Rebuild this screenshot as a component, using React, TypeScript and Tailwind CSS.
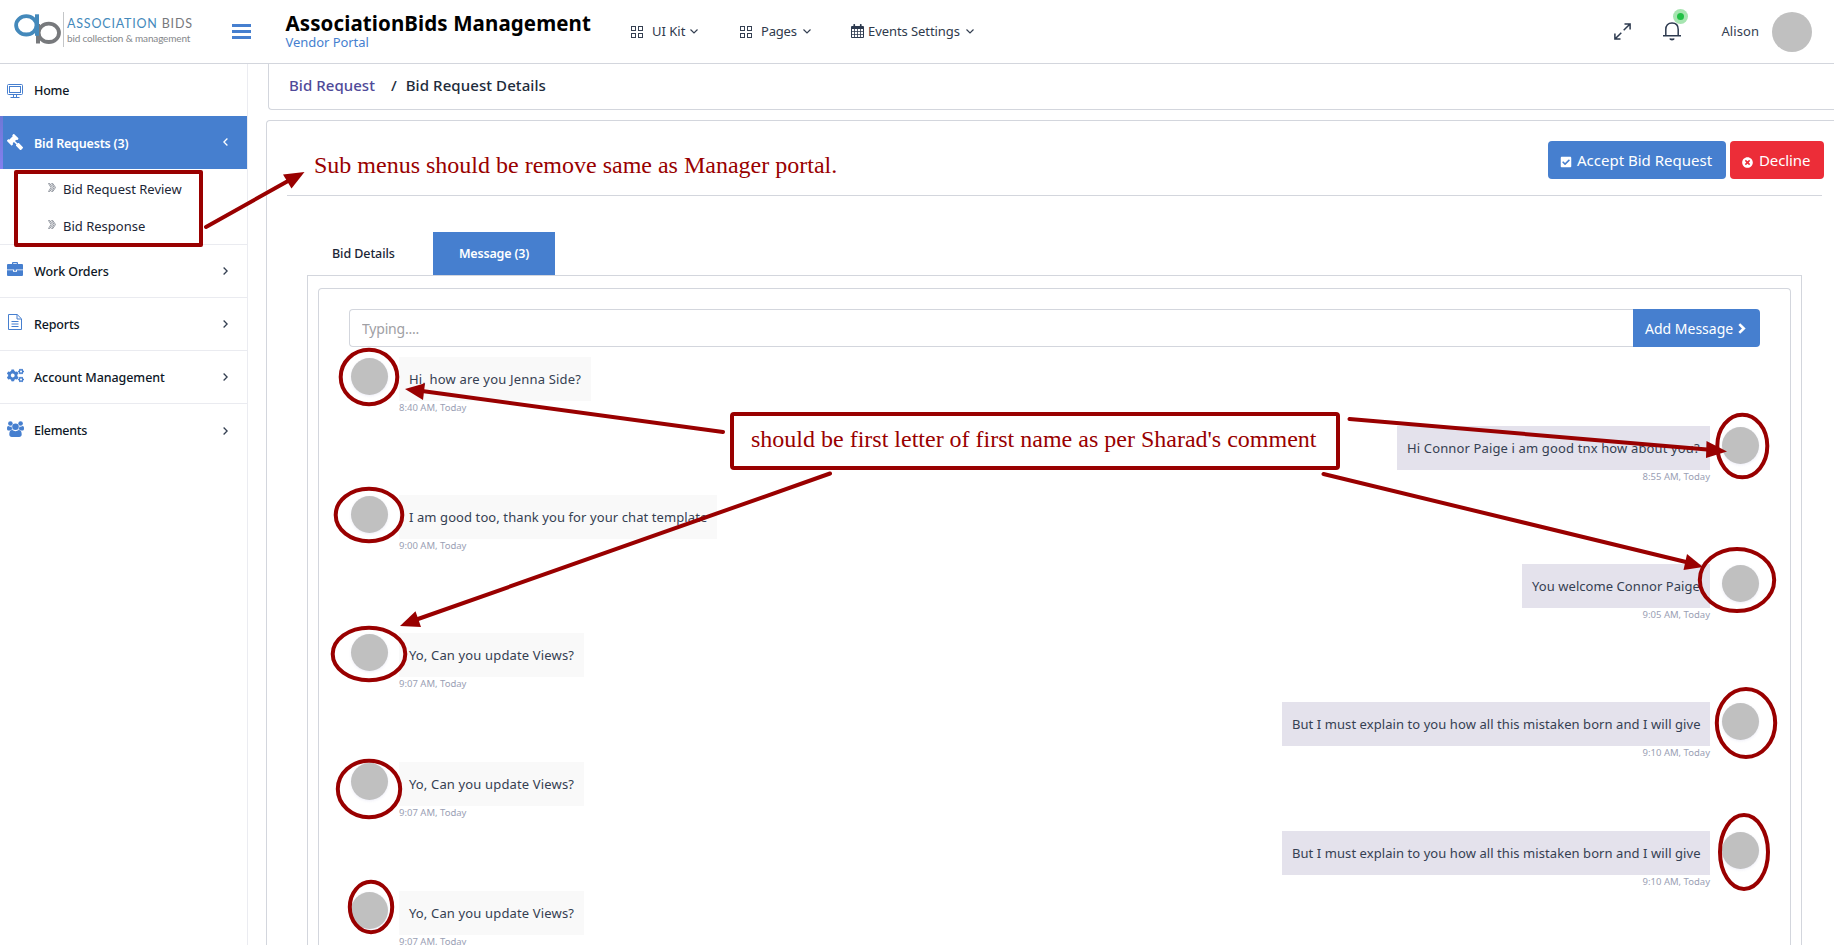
import type { ReactNode } from 'react';
import { FaCheckSquare, FaCogs, FaGavel, FaTimesCircle } from 'react-icons/fa';

function Logo() {
  return (
    <div className="flex h-full w-[232px] shrink-0 items-start pl-3.5 pt-3">
      <svg width="48" height="36" viewBox="0 0 48 36" fill="none" className="shrink-0">
        <ellipse cx="34.8" cy="20.8" rx="10.2" ry="9.2" stroke="#77797c" strokeWidth="3.8" />
        <path d="M24 12v19.5" stroke="#77797c" strokeWidth="4" />
        <ellipse cx="12.3" cy="13.3" rx="10.2" ry="9.2" stroke="#4489bb" strokeWidth="3.8" />
        <path d="M23 2.3v21.5" stroke="#4489bb" strokeWidth="4" />
      </svg>
      <div className="ml-px mr-1 h-[35px] w-px bg-[#c4c6c8]" />
      <div className="-ml-px flex flex-col whitespace-nowrap pt-1 font-['Lato',sans-serif]">
        <div className="text-[12.5px] leading-4 tracking-[0.8px] text-[#4489bb]">
          ASSOCIATION <span className="text-[#77797c]">BIDS</span>
        </div>
        <div className="text-[10px] leading-[13px] tracking-[-0.16px] text-[#85878a]">bid collection &amp; management</div>
      </div>
    </div>
  );
}

function GridIcon() {
  return (
    <svg width="12" height="12" viewBox="0 0 12 12" fill="none" stroke="#354052" className="shrink-0">
      <rect x="0.5" y="0.5" width="4" height="4" />
      <rect x="7.5" y="0.5" width="4" height="4" />
      <rect x="0.5" y="7.5" width="4" height="4" />
      <rect x="7.5" y="7.5" width="4" height="4" />
    </svg>
  );
}

function CalendarIcon() {
  return (
    <svg width="13" height="14" viewBox="0 0 13 14" className="mb-px shrink-0">
      <path
        fill="#2d3a4f"
        fillRule="evenodd"
        d="M1 2h1.4V.8a.8.8 0 0 1 1.7 0V2h4.8V.8a.8.8 0 0 1 1.7 0V2H12a1 1 0 0 1 1 1v10a1 1 0 0 1-1 1H1a1 1 0 0 1-1-1V3a1 1 0 0 1 1-1zM1 5v2.200h2.200V5zM4 5v2.200h2.200V5zM7 5v2.200h2.200V5zM10 5v2.200h2V5zM1 8v2.200h2.200V8zM4 8v2.200h2.200V8zM7 8v2.200h2.200V8zM10 8v2.200h2V8zM1 11v2h2.200v-2zM4 11v2h2.200v-2zM7 11v2h2.200v-2zM10 11v2h2v-2z"
      />
    </svg>
  );
}

function AngleDown() {
  return (
    <svg width="8" height="5" viewBox="0 0 8 5" fill="none" stroke="#354052" strokeWidth="1.2" className="shrink-0">
      <path d="M.5.5 4 4 7.5.5" />
    </svg>
  );
}

function NavItem({ className, icon, children }: { className: string; icon: ReactNode; children: ReactNode }) {
  return (
    <div className={`flex shrink-0 items-center text-[13px] text-[#2f3a4c] ${className}`}>
      {icon}
      {children}
      <AngleDown />
    </div>
  );
}

function Header() {
  return (
    <header className="flex h-16 shrink-0 items-stretch border-b border-[#d3d6dd] bg-white">
      <Logo />
      <div className="flex w-[53.5px] shrink-0 flex-col gap-[3px] pt-6">
        <div className="h-[3px] w-[19px] bg-[#467fcf]" />
        <div className="h-[3px] w-[19px] bg-[#467fcf]" />
        <div className="h-[3px] w-[19px] bg-[#467fcf]" />
      </div>
      <div className="flex w-[345.5px] shrink-0 flex-col pt-3">
        <div className="whitespace-nowrap text-[20.5px] font-bold leading-[22px] tracking-[0.1px] text-black">
          AssociationBids Management
        </div>
        <div className="text-[13px] leading-4 tracking-[-0.05px] text-[#467fcf]">Vendor Portal</div>
      </div>
      <nav className="flex items-center">
        <NavItem className="w-[109px]" icon={<GridIcon />}>
          <span className="ml-[9px] mr-[5px]">UI Kit</span>
        </NavItem>
        <NavItem className="w-[111px]" icon={<GridIcon />}>
          <span className="ml-[9px] mr-[6px] tracking-[-0.2px]">Pages</span>
        </NavItem>
        <NavItem className="" icon={<CalendarIcon />}>
          <span className="ml-1 mr-1.5 tracking-[-0.07px]">Events Settings</span>
        </NavItem>
      </nav>
      <div className="ml-auto flex items-center pr-[22px]">
        <svg width="17" height="17" viewBox="0 0 17 17" fill="none" stroke="#2d3a4f" strokeWidth="1.5" className="mb-px">
          <path d="M10.5 1h5.6v5.6M16 1 9.7 7.3M6.5 16H.9v-5.6M1 16l6.3-6.3" />
        </svg>
        <div className="relative ml-8">
          <svg width="18" height="19" viewBox="0 0 18 19" fill="none" stroke="#2d3a4f" strokeWidth="1.5">
            <path d="M0 13.700h18M2.8 13.500V7.4C2.8 3.4 5 1 9 1s6.2 2.4 6.2 6.4v6.100" />
            <path d="M7 16.500c.5 1.300 3.500 1.300 4 0" strokeWidth="1.8" />
          </svg>
          <div className="absolute -top-[13px] left-[10px] flex size-[15px] items-center justify-center rounded-full bg-[#a6e5b0]">
            <div className="size-[7px] rounded-full bg-[#21c045]" />
          </div>
        </div>
        <span className="ml-10 text-[13px] tracking-[0.07px] text-[#354052]">Alison</span>
        <div className="ml-[13px] size-10 rounded-full bg-[#c0c0c0]" />
      </div>
    </header>
  );
}

function AngleRight() {
  return (
    <svg width="5" height="8" viewBox="0 0 5 8" fill="none" stroke="#354052" strokeWidth="1.3" className="ml-auto mr-[19px]">
      <path d="M.6.5 4.1 4 .6 7.5" />
    </svg>
  );
}

function DesktopIcon() {
  return (
    <svg width="16" height="14" viewBox="0 0 16 14" fill="none" stroke="#467fcf">
      <rect x=".5" y=".5" width="15" height="10" rx="1" />
      <rect x="2.5" y="2.5" width="11" height="6" />
      <path d="M6.5 10.5v2.5M9.5 10.5v2.5M3.5 13.5h9" />
    </svg>
  );
}

function BriefcaseIcon() {
  return (
    <svg width="16" height="14" viewBox="0 0 16 14" fill="#467fcf">
      <path
        fillRule="evenodd"
        d="M5 2V1a1 1 0 0 1 1-1h4a1 1 0 0 1 1 1v1h4a1 1 0 0 1 1 1v4.5H0V3a1 1 0 0 1 1-1zM6.2 1.200V2h3.600v-.8z"
      />
      <path fillRule="evenodd" d="M0 8.300h6v1.500h4V8.300h6V13a1 1 0 0 1-1 1H1a1 1 0 0 1-1-1z" />
      <path d="M7 7.200h2v1.600H7z" />
    </svg>
  );
}

function ReportIcon() {
  return (
    <svg width="14" height="16" viewBox="0 0 14 16" fill="none" stroke="#467fcf" className="ml-px">
      <path d="M.5.5h8.700l4.300 4.300v10.700H.5zM9 .7v4.300h4.300" />
      <path d="M3.500 7.500h7M3.500 10h7M3.500 12.500h7" />
    </svg>
  );
}

function UsersIcon() {
  return (
    <svg width="17" height="16" viewBox="0 0 17 16" fill="#467fcf">
      <circle cx="3.400" cy="2.500" r="2.300" />
      <circle cx="13.600" cy="2.500" r="2.300" />
      <path d="M0 7.500c0-1.700.5-2.400 1.500-2.400.6.400 1.200.6 1.900.6.500 0 .9-.1 1.300-.2-.1 1.200.2 2 .8 2.900-1 0-1.800.5-2.400 1.100H1.600C.5 9.500 0 8.900 0 7.500zM17 7.500c0-1.700-.5-2.400-1.500-2.400-.6.400-1.200.6-1.900.6-.5 0-.9-.1-1.300-.2.1 1.200-.2 2-.8 2.900 1 0 1.800.5 2.400 1.100h1.500c1.100 0 1.600-.6 1.600-2z" />
      <circle cx="8.500" cy="5.700" r="3.300" />
      <path d="M5.300 9.100c.9.700 2 1.100 3.200 1.100s2.300-.4 3.200-1.100c2.300 0 3 2.100 3 4.400 0 1.600-1 2.500-2.500 2.500H4.800c-1.500 0-2.500-.9-2.500-2.500 0-2.300.7-4.400 3-4.400z" />
    </svg>
  );
}

function SideItem({ icon, label, tracking, border }: { icon: ReactNode; label: string; tracking: string; border: boolean }) {
  return (
    <div className={`flex h-[53px] items-center ${border ? 'border-b border-[#eaebf0]' : ''}`}>
      <div className="flex w-[34px] shrink-0 pb-1 pl-[7px]">{icon}</div>
      <span className={`pt-0.5 text-[12.5px] font-medium text-[#0e1726] ${tracking}`}>{label}</span>
      <AngleRight />
    </div>
  );
}

function SubItem({ label }: { label: string }) {
  return (
    <div className="flex h-[37px] items-center pl-12">
      <svg width="8" height="9" viewBox="0 0 8 9" fill="none" stroke="#8a8f99" strokeWidth=".9" className="mb-[3px] mr-[7px]">
        <path d="M.5.5h1.300L4.600 4.500 1.800 8.500H.5L3 4.500zM3.600.5h1.200l2.700 4-2.700 4H3.600l2.500-4z" />
      </svg>
      <span className="text-[13px] leading-5 text-[#1c2636]">{label}</span>
    </div>
  );
}

function Sidebar() {
  return (
    <aside className="flex w-[248px] shrink-0 flex-col border-r border-[#ebecf1] bg-white">
      <div className="flex h-[52px] items-center">
        <div className="flex w-[34px] shrink-0 pl-[7px] pt-px">
          <DesktopIcon />
        </div>
        <span className="pt-0.5 text-[12.5px] font-medium tracking-[-0.2px] text-[#0e1726]">Home</span>
      </div>
      <div className="flex h-[53px] items-center bg-[#467fcf] text-white">
        <div className="h-full w-[3px] shrink-0 bg-gradient-to-b from-[#6e78d6] to-[#8480ee]" />
        <div className="flex w-[31px] shrink-0 pb-0.5 pl-1">
          <FaGavel size={16} className="-scale-x-100" />
        </div>
        <span className="pt-[3px] text-[12.5px] font-semibold tracking-[-0.18px]">Bid Requests (3)</span>
        <svg width="5" height="8" viewBox="0 0 5 8" fill="none" stroke="#fff" strokeWidth="1.3" className="mb-0.5 ml-auto mr-[19px]">
          <path d="M4.400.5.9 4l3.500 3.500" />
        </svg>
      </div>
      <div className="flex h-[76px] flex-col border-b border-[#eaebf0] pt-0.5">
        <SubItem label="Bid Request Review" />
        <SubItem label="Bid Response" />
      </div>
      <SideItem icon={<BriefcaseIcon />} label="Work Orders" tracking="tracking-[-0.1px]" border />
      <SideItem icon={<ReportIcon />} label="Reports" tracking="tracking-[-0.17px]" border />
      <SideItem icon={<FaCogs size={17} color="#467fcf" />} label="Account Management" tracking="tracking-[-0.07px]" border />
      <SideItem icon={<UsersIcon />} label="Elements" tracking="tracking-[-0.28px]" border={false} />
    </aside>
  );
}

type Message = { text: string; time: string; mine: boolean; row: string; bubble: string };

const messages: Message[] = [
  { text: 'Hi, how are you Jenna Side?', time: '8:40 AM, Today', mine: false, row: 'h-[69px]', bubble: 'w-[192px] tracking-[0.18px]' },
  { text: 'Hi Connor Paige i am good tnx how about you?', time: '8:55 AM, Today', mine: true, row: 'h-[69px]', bubble: 'w-[313px] tracking-[0.14px]' },
  { text: 'I am good too, thank you for your chat template', time: '9:00 AM, Today', mine: false, row: 'h-[69px]', bubble: 'w-[318px] tracking-[0.09px]' },
  { text: 'You welcome Connor Paige', time: '9:05 AM, Today', mine: true, row: 'h-[69px]', bubble: 'w-[188px] tracking-[0.06px]' },
  { text: 'Yo, Can you update Views?', time: '9:07 AM, Today', mine: false, row: 'h-[69px]', bubble: 'w-[185px] tracking-[0.15px]' },
  { text: 'But I must explain to you how all this mistaken born and I will give', time: '9:10 AM, Today', mine: true, row: 'h-[60px]', bubble: 'w-[428px] tracking-[0.07px]' },
  { text: 'Yo, Can you update Views?', time: '9:07 AM, Today', mine: false, row: 'h-[69px]', bubble: 'w-[185px] tracking-[0.15px]' },
  { text: 'But I must explain to you how all this mistaken born and I will give', time: '9:10 AM, Today', mine: true, row: 'h-[60px]', bubble: 'w-[428px] tracking-[0.07px]' },
  { text: 'Yo, Can you update Views?', time: '9:07 AM, Today', mine: false, row: 'h-[69px]', bubble: 'w-[185px] tracking-[0.15px]' },
];

function MessageRow({ message }: { message: Message }) {
  const { text, time, mine, row, bubble } = message;
  return (
    <div className={`flex shrink-0 items-start ${row} ${mine ? 'flex-row-reverse gap-3 pr-px' : 'gap-[11px] pl-0.5'}`}>
      <div className="mt-px size-[37px] shrink-0 rounded-full bg-[#c0c0c0] shadow-[0_1px_3px_rgba(110,110,190,0.12)]" />
      <div className={`flex flex-col ${mine ? 'items-end' : 'items-start'}`}>
        <div
          className={`flex h-11 items-center whitespace-nowrap px-2.5 pt-0.5 text-[13px] text-[#354052] ${bubble} ${mine ? 'bg-[#e4e2ec]' : 'bg-[#f9f9f9]'}`}
        >
          {text}
        </div>
        <div className="whitespace-nowrap text-[9.5px] leading-[13px] text-[#9aa0b4]">{time}</div>
      </div>
    </div>
  );
}

function MainContent() {
  return (
    <main className="flex min-w-0 flex-1 flex-col overflow-hidden">
      <div className="ml-5 flex h-[46px] shrink-0 items-center rounded-bl border-b border-l border-[#d3d6dd] pb-[3px] pl-5 text-[15px] font-medium">
        <span className="tracking-[0.04px] text-[#4f4a99]">Bid Request</span>
        <span className="ml-4 text-[#212b3b]">/</span>
        <span className="ml-[9px] tracking-[0.08px] text-[#212b3b]">Bid Request Details</span>
      </div>
      <div className="ml-[18px] mt-2.5 flex min-h-0 flex-1 flex-col rounded-tl border-l border-t border-[#d3d6dd]">
        <div className="ml-5 mr-3 flex h-[75px] shrink-0 items-start justify-end border-b border-[#d3d6dd] pt-5">
          <div className="-mr-0.5 flex gap-1 text-[15px] text-white">
            <button className="flex h-[38px] w-[178px] items-center rounded bg-[#467fcf] pl-3">
              <FaCheckSquare size={12} className="mr-[5px] mt-1" />
              <span className="whitespace-nowrap">Accept Bid Request</span>
            </button>
            <button className="flex h-[38px] w-[94px] items-center rounded bg-[#ec2d38] pl-3">
              <FaTimesCircle size={11} className="mr-1.5 mt-1" />
              <span className="tracking-[-0.12px]">Decline</span>
            </button>
          </div>
        </div>
        <div className="ml-10 mr-8 mt-9 flex h-[43px] shrink-0 text-[12.5px]">
          <div className="flex w-[126px] items-center pl-[25px] pt-0.5 font-medium tracking-[-0.08px] text-[#1c2636]">Bid Details</div>
          <div className="flex w-[122px] items-center justify-center bg-[#467fcf] pt-0.5 font-semibold tracking-[-0.18px] text-white">
            Message (3)
          </div>
        </div>
        <div className="ml-10 mr-8 flex min-h-0 flex-1 flex-col border-x border-t border-[#d3d6dd] px-2.5 pt-3">
          <div className="flex min-h-0 flex-1 flex-col rounded-t border-x border-t border-[#d3d6dd] px-[30px] pt-5">
            <div className="flex h-[38px] shrink-0">
              <input
                placeholder="Typing...."
                className="min-w-0 flex-1 rounded-l border border-r-0 border-[#d3d6dd] px-3 text-[14px] tracking-[-0.2px] placeholder:text-[#a0a0a4]"
              />
              <button className="flex w-[127px] items-center rounded-r bg-[#467fcf] pl-3 text-[14px] text-white">
                <span className="whitespace-nowrap">Add Message</span>
                <svg width="8" height="11" viewBox="0 0 8 11" fill="none" stroke="#fff" strokeWidth="2.600" className="ml-[5px]">
                  <path d="M1.300 1.100 5.800 5.500 1.300 9.900" />
                </svg>
              </button>
            </div>
            <div className="mt-2.5 flex min-h-0 flex-1 flex-col overflow-hidden">
              {messages.map((m, i) => (
                <MessageRow key={i} message={m} />
              ))}
            </div>
          </div>
        </div>
      </div>
    </main>
  );
}

const circles = [
  [369, 377, 28.3, 27.3],
  [1742.3, 446, 25, 31.3],
  [369, 515, 33.3, 26.3],
  [1737, 580, 37.2, 31],
  [369, 654, 36.3, 26.3],
  [1746, 723, 29.2, 34],
  [369, 789, 31.2, 28.2],
  [1744, 852, 24, 37],
  [371, 907, 21.2, 25.2],
];

const arrows = [
  { shaft: 'M206 227 288 181', head: '304.5,172 283,174.5 291.5,188.5' },
  { shaft: 'M723 432 422 391', head: '405,389 425,383.3 423,400' },
  { shaft: 'M1349.5 419 1707 449.5', head: '1727,451.5 1706.5,441 1706,458' },
  { shaft: 'M830 473.5 418 619', head: '400,626 415.5,611.3 421,627' },
  { shaft: 'M1323.5 474 1686 562', head: '1703,567 1687,554 1683.5,570' },
];

function Annotations() {
  return (
    <div className="pointer-events-none absolute inset-0 font-['Liberation_Serif',serif] text-[24px] leading-[28px] text-[#990000]">
      <svg width="1834" height="945" viewBox="0 0 1834 945" fill="none" stroke="#990000" strokeWidth="4" className="absolute inset-0">
        <rect x="16" y="172" width="185" height="73" strokeLinejoin="round" />
        {circles.map(([cx, cy, rx, ry]) => (
          <ellipse key={`${cx}-${cy}`} cx={cx} cy={cy} rx={rx} ry={ry} />
        ))}
        {arrows.map((a) => (
          <g key={a.shaft}>
            <path d={a.shaft} strokeLinecap="round" />
            <polygon points={a.head} fill="#990000" stroke="none" />
          </g>
        ))}
      </svg>
      <div className="absolute left-[314px] top-[151px] whitespace-nowrap">Sub menus should be remove same as Manager portal.</div>
      <div className="absolute left-[730px] top-[412px] flex h-[58px] w-[610px] items-center whitespace-nowrap rounded-sm border-4 border-[#990000] bg-white pb-1 pl-[17px]">
        should be first letter of first name as per Sharad&apos;s comment
      </div>
    </div>
  );
}

export default function App() {
  return (
    <div className="relative flex h-[945px] w-[1834px] flex-col overflow-hidden bg-white font-['Noto_Sans',sans-serif]">
      <Header />
      <div className="flex min-h-0 flex-1">
        <Sidebar />
        <MainContent />
      </div>
      <Annotations />
    </div>
  );
}
